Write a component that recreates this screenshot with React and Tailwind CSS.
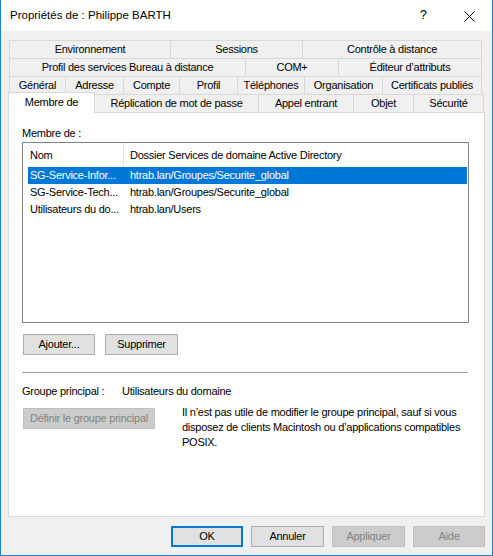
import React from "react";

const font = { fontFamily: '"Liberation Sans", Arial, sans-serif' };

// widths measured per tab row, borders included
const rowTop = [
  ["Environnement", "w-[161px]"],
  ["Sessions", "w-[132px]"],
  ["Contrôle à distance", "w-[180px]"],
];
const rowMid = [
  ["Profil des services Bureau à distance", "w-[236px]"],
  ["COM+", "w-[93px]"],
  ["Éditeur d’attributs", "w-[144px]"],
];
const rowLow = [
  ["Général", "w-[56px]"],
  ["Adresse", "w-[58px]"],
  ["Compte", "w-[56px]"],
  ["Profil", "w-[58px]"],
  ["Téléphones", "w-[67px]"],
  ["Organisation", "w-[78px]"],
  ["Certificats publiés", "w-[100px]"],
];
const rowFront = [
  ["Réplication de mot de passe", "w-[163px]"],
  ["Appel entrant", "w-[95px]"],
  ["Objet", "w-[60px]"],
  ["Sécurité", "w-[71px]"],
];

const groups = [
  ["SG-Service-Infor...", "htrab.lan/Groupes/Securite_global"],
  ["SG-Service-Tech...", "htrab.lan/Groupes/Securite_global"],
  ["Utilisateurs du do...", "htrab.lan/Users"],
];

function TabRow({ tabs }) {
  return (
    <div className="flex h-[18px] ml-[1px]">
      {tabs.map(([label, w], i) => (
        <div
          key={label}
          className={`${w} h-[18px] flex items-center justify-center whitespace-nowrap border-l border-t border-[#d9d9d9] ${
            i === tabs.length - 1 ? "border-r" : ""
          }`}
        >
          {label}
        </div>
      ))}
    </div>
  );
}

function Button({ children, className = "", disabled = false, primary = false }) {
  return (
    <div
      className={`h-[21px] flex items-center justify-center whitespace-nowrap ${
        disabled
          ? "bg-[#cccccc] border border-[#bfbfbf] text-[#838383]"
          : primary
          ? "bg-[#e1e1e1] border-2 border-[#0078d7]"
          : "bg-[#e1e1e1] border border-[#adadad]"
      } ${className}`}
    >
      {children}
    </div>
  );
}

export default function App() {
  return (
    <div
      className="w-[493px] h-[556px] bg-[#f0f0f0] border-x border-b border-[#1883d7] flex flex-col text-[11px] tracking-[-0.25px] text-black leading-[15px]"
      style={font}
    >
      {/* title bar */}
      <div className="h-[31px] bg-white flex items-center pl-[9px] pr-[17px] shrink-0 tracking-normal">
        <span className="flex-1 text-[11.5px]">Propriétés de : Philippe BARTH</span>
        <span className="text-[13px] mr-[37px] -mt-[2px]">?</span>
        <svg width="11" height="11" viewBox="0 0 11 11" className="mt-[2px]">
          <path d="M0.5 0.5 L10.5 10.5 M10.5 0.5 L0.5 10.5" stroke="#000" strokeWidth="1" />
        </svg>
      </div>

      <div className="px-[7px] pt-[9px] flex flex-col">
        <TabRow tabs={rowTop} />
        <TabRow tabs={rowMid} />
        <TabRow tabs={rowLow} />
        <div className="flex items-end -mt-[2px] -mb-px relative z-10">
          <div className="w-[87px] h-[21px] bg-white border-l border-t border-r border-[#d9d9d9] flex items-center justify-center pb-[2px]">
            Membre de
          </div>
          {rowFront.map(([label, w], i) => (
            <div
              key={label}
              className={`${w} h-[18px] mb-px flex items-center justify-center whitespace-nowrap border-t border-[#d9d9d9] ${
                i === 0 ? "" : "border-l"
              } ${i === rowFront.length - 1 ? "border-r" : ""}`}
            >
              {label}
            </div>
          ))}
        </div>

        {/* page content */}
        <div className="h-[405px] bg-white border border-[#d9d9d9] pl-[13px] pt-[13px] flex flex-col">
          <div>Membre de :</div>
          <div className="mt-[1px] w-[447px] h-[181px] border border-[#828282] flex flex-col">
            <div className="h-[24px] flex items-center shrink-0">
              <div className="w-[101px] h-full border-r border-[#e5e5e5] pl-[7px] flex items-center">Nom</div>
              <div className="pl-[6px]">Dossier Services de domaine Active Directory</div>
            </div>
            {groups.map(([name, path], i) => (
              <div
                key={i}
                className={`ml-[5px] mr-[1px] h-[17px] flex items-center ${
                  i === 0 ? "bg-[#0078d7] text-white" : ""
                }`}
              >
                <div className="w-[97px] pl-[2px] whitespace-nowrap">{name}</div>
                <div className="pl-[5px] whitespace-nowrap">{path}</div>
              </div>
            ))}
          </div>

          <div className="flex gap-[10px] mt-[11px] ml-[1px]">
            <Button className="w-[72px]">Ajouter...</Button>
            <Button className="w-[73px]">Supprimer</Button>
          </div>

          <div className="mt-[17px] w-[446px] h-px bg-[#a0a0a0]" />

          <div className="mt-[11px] flex">
            <span className="w-[100px]">Groupe principal :</span>
            <span>Utilisateurs du domaine</span>
          </div>

          <div className="mt-[9px] flex items-start ml-[1px]">
            <Button disabled className="w-[132px]">Définir le groupe principal</Button>
            <p className="ml-[27px] -mt-[3px] whitespace-nowrap">
              Il n’est pas utile de modifier le groupe principal, sauf si vous
              <br />
              disposez de clients Macintosh ou d’applications compatibles
              <br />
              POSIX.
            </p>
          </div>
        </div>

        {/* dialog buttons */}
        <div className="mt-[9px] flex justify-end gap-[8px]">
          <Button primary className="w-[72px]">OK</Button>
          <Button className="w-[73px]">Annuler</Button>
          <Button disabled className="w-[73px]">Appliquer</Button>
          <Button disabled className="w-[72px]">Aide</Button>
        </div>
      </div>
    </div>
  );
}
